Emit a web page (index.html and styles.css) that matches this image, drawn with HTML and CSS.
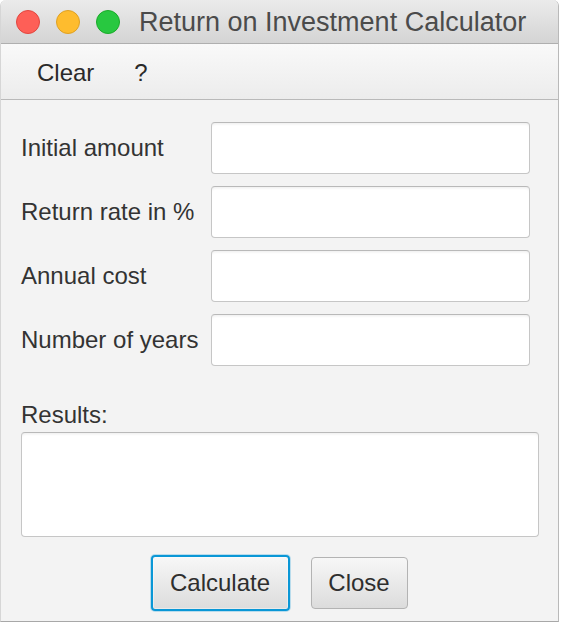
FILE: index.html
```html
<!DOCTYPE html>
<html>
<head>
<meta charset="utf-8">
<link rel="stylesheet" href="styles.css">
</head>
<body>
<div class="window">
  <div class="titlebar">
    <div class="lights">
      <span class="light red"></span>
      <span class="light yellow"></span>
      <span class="light green"></span>
    </div>
    <div class="title">Return on Investment Calculator</div>
  </div>
  <div class="menubar">
    <span class="menu-item">Clear</span>
    <span class="menu-item">?</span>
  </div>
  <div class="content">
    <div class="form">
      <label class="label">Initial amount</label>
      <div class="field"></div>
      <label class="label">Return rate in %</label>
      <div class="field"></div>
      <label class="label">Annual cost</label>
      <div class="field"></div>
      <label class="label">Number of years</label>
      <div class="field"></div>
    </div>
    <div class="results-label">Results:</div>
    <div class="results"></div>
    <div class="buttons">
      <button class="btn btn-focus">Calculate</button>
      <button class="btn">Close</button>
    </div>
  </div>
</div>
</body>
</html>
```
FILE: styles.css
```css
html, body {
  margin: 0;
  padding: 0;
  background: #ffffff;
}
body {
  font-family: "Liberation Sans", Arial, sans-serif;
  color: #333333;
}
.window {
  box-sizing: border-box;
  width: 559px;
  height: 622px;
  border-right: 1px solid #b9b9b9;
  border-bottom: 1px solid #a8a8a8;
  border-left: 1px solid #d6d6d6;
  border-radius: 6px 6px 0 0;
  overflow: hidden;
  background: #f3f3f3;
  display: flex;
  flex-direction: column;
}
.titlebar {
  height: 43px;
  flex: none;
  background: linear-gradient(#ebebeb, #d4d4d4);
  border-bottom: 1px solid #afafaf;
  display: flex;
  align-items: center;
}
.lights {
  display: flex;
  gap: 16px;
  margin-left: 15px;
  margin-top: 1px;
}
.light {
  width: 22px;
  height: 22px;
  border-radius: 50%;
  display: block;
  border: 1px solid transparent;
}
.red { background: #fe5f57; border-color: #e2463f; }
.yellow { background: #febc2e; border-color: #dfa123; }
.green { background: #28c840; border-color: #1aab29; }
.title {
  margin-left: 19px;
  font-size: 27px;
  color: #4b4b4b;
  white-space: nowrap;
  line-height: 1;
  padding-top: 1px;
}
.menubar {
  height: 55px;
  flex: none;
  background: linear-gradient(#f9f9f9, #ececec);
  border-bottom: 1px solid #b9b9b9;
  display: flex;
  align-items: center;
  padding-left: 36px;
  gap: 40px;
  font-size: 24px;
  color: #2a2a2a;
}
.menu-item {
  line-height: 1;
  padding-top: 2px;
}
.content {
  padding: 22px 19px 0 20px;
  display: flex;
  flex-direction: column;
}
.form {
  display: grid;
  grid-template-columns: 190px 319px;
  grid-auto-rows: 52px;
  row-gap: 12px;
  align-items: center;
}
.label {
  font-size: 24px;
  color: #333333;
  white-space: nowrap;
}
.field, .results {
  background: #ffffff;
  border: 1px solid #c6c6c6;
  border-top-color: #b9b9b9;
  border-radius: 4px;
  box-shadow: inset 0 3px 3px -2px rgba(0, 0, 0, 0.08);
  box-sizing: border-box;
}
.field {
  height: 52px;
}
.results-label {
  margin-top: 35px;
  font-size: 24px;
  line-height: 28px;
  color: #333333;
}
.results {
  margin-top: 3px;
  width: 518px;
  height: 105px;
}
.buttons {
  display: flex;
  justify-content: center;
  gap: 21px;
  margin-top: 20px;
  padding-right: 2px;
}
.btn {
  font-family: inherit;
  font-size: 24px;
  color: #2e2e2e;
  height: 52px;
  padding: 0;
  border: 1px solid #b3b3b3;
  border-radius: 4px;
  background: linear-gradient(#f7f7f7, #dcdcdc);
  width: 97px;
  margin: 0;
}
.btn-focus {
  width: 139px;
  height: 56px;
  margin-top: -2px;
  border: 2px solid #0a97d6;
  box-shadow: 0 0 0 1px rgba(10, 151, 214, 0.25), inset 0 0 0 1px rgba(255, 255, 255, 0.4);
}
```
